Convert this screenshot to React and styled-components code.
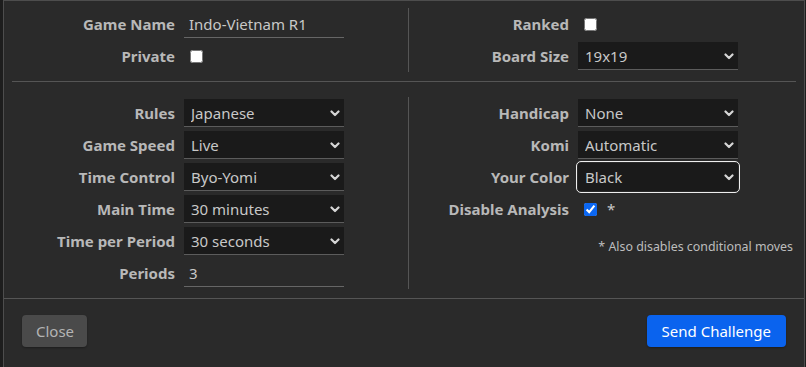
import React from 'react';
import styled, { createGlobalStyle } from 'styled-components';

const Global = createGlobalStyle`
  html, body { margin: 0; padding: 0; background: #1d1d1d; }
  body { font-family: "Noto Sans", "Open Sans", sans-serif; }
  * { box-sizing: border-box; }
`;

const Modal = styled.div`
  margin-left: 3px;
  width: 802px;
  min-height: 380px;
  background: #2a2a2a;
  border: 1px solid #4d4d4d;
  display: flex;
  flex-direction: column;
`;

const Section = styled.div`
  display: grid;
  grid-template-columns: 404px 1fr;
  padding-top: ${p => p.$pt || 0}px;
`;

const Column = styled.div`
  display: flex;
  flex-direction: column;
  border-left: ${p => (p.$divider ? '1px solid #555' : 'none')};
  padding-right: ${p => p.$pr}px;
`;

const Row = styled.div`
  display: grid;
  grid-template-columns: 1fr 160px;
  column-gap: 9px;
  align-items: center;
  height: 32px;
`;

const Label = styled.label`
  text-align: right;
  font-weight: 700;
  font-size: 15px;
  color: #b8b8b8;
  white-space: nowrap;
`;

const TextInput = styled.input`
  height: 28px;
  width: 160px;
  background: transparent;
  border: none;
  border-bottom: 1px solid #666;
  color: #c8c8c8;
  font: 15px "Noto Sans", "Open Sans", sans-serif;
  padding: 0 5px;
  outline: none;
`;

const SelectWrap = styled.div`
  position: relative;
  width: 160px;
  height: 28px;
  border-radius: ${p => (p.$focused ? '3px' : '0')};
  outline: ${p => (p.$focused ? '1.5px solid #eeeeee' : 'none')};
  outline-offset: 1px;
`;

const Select = styled.select`
  appearance: none;
  -webkit-appearance: none;
  width: 100%;
  height: 100%;
  background: #1a1a1a;
  border: none;
  border-bottom: 1px solid ${p => (p.$focused ? '#1a1a1a' : '#5c5c5c')};
  border-radius: ${p => (p.$focused ? '3px' : '0')};
  color: #c8c8c8;
  font: 15px "Noto Sans", "Open Sans", sans-serif;
  padding: 0 24px 0 7px;
  outline: none;
`;

const Chevron = styled.svg`
  position: absolute;
  right: 4px;
  top: 11px;
  width: 10px;
  height: 7px;
  pointer-events: none;
`;

const CheckCell = styled.div`
  display: flex;
  align-items: center;
  gap: 10px;
  color: #c8c8c8;
  font-size: 15px;
`;

const Check = styled.input`
  width: 13px;
  height: 13px;
  margin: 0 0 0 6px;
  accent-color: #0b67f2;
`;

const Divider = styled.hr`
  border: none;
  border-top: 1px solid #555;
  margin: 9px 8px 15px;
  height: 0;
`;

const Note = styled.div`
  align-self: flex-end;
  margin-top: 14px;
  margin-right: -55px;
  font-size: 12.4px;
  line-height: 16px;
  color: #bdbdbd;
`;

const Footer = styled.div`
  margin-top: 9px;
  border-top: 1px solid #555;
  padding: 16px 18px 16px 18px;
  display: flex;
  justify-content: space-between;
`;

const Button = styled.button`
  height: 32px;
  padding: 0 ${p => (p.$primary ? 15 : 13)}px 0 ${p => (p.$primary ? 15 : 14)}px;
  border: none;
  border-radius: 4px;
  font: 15px "Noto Sans", "Open Sans", sans-serif;
  background: ${p => (p.$primary ? '#0a63ee' : '#4a4a4a')};
  color: ${p => (p.$primary ? '#ffffff' : '#b4b4b4')};
  box-shadow: 0 1px 2px rgba(0,0,0,0.3);
`;

const DropSelect = ({ value, focused }) => (
  <SelectWrap $focused={focused}>
    <Select $focused={focused} defaultValue={value}>
      <option>{value}</option>
    </Select>
    <Chevron viewBox="0 0 10 7">
      <path d="M1.5 1.5 L5 5 L8.5 1.5" fill="none" stroke="#d6d6d6" strokeWidth="2.2" strokeLinecap="round" strokeLinejoin="round" />
    </Chevron>
  </SelectWrap>
);

export default function App() {
  return (
    <>
      <Global />
      <Modal>
        <Section $pt={7}>
          <Column $pr={64}>
            <Row>
              <Label>Game Name</Label>
              <TextInput defaultValue="Indo-Vietnam R1" />
            </Row>
            <Row>
              <Label>Private</Label>
              <CheckCell><Check type="checkbox" /></CheckCell>
            </Row>
          </Column>
          <Column $divider $pr={66}>
            <Row>
              <Label>Ranked</Label>
              <CheckCell><Check type="checkbox" /></CheckCell>
            </Row>
            <Row>
              <Label>Board Size</Label>
              <DropSelect value="19x19" />
            </Row>
          </Column>
        </Section>
        <Divider />
        <Section>
          <Column $pr={64}>
            <Row>
              <Label>Rules</Label>
              <DropSelect value="Japanese" />
            </Row>
            <Row>
              <Label>Game Speed</Label>
              <DropSelect value="Live" />
            </Row>
            <Row>
              <Label>Time Control</Label>
              <DropSelect value="Byo-Yomi" />
            </Row>
            <Row>
              <Label>Main Time</Label>
              <DropSelect value="30 minutes" />
            </Row>
            <Row>
              <Label>Time per Period</Label>
              <DropSelect value="30 seconds" />
            </Row>
            <Row>
              <Label>Periods</Label>
              <TextInput defaultValue="3" />
            </Row>
          </Column>
          <Column $divider $pr={66}>
            <Row>
              <Label>Handicap</Label>
              <DropSelect value="None" />
            </Row>
            <Row>
              <Label>Komi</Label>
              <DropSelect value="Automatic" />
            </Row>
            <Row>
              <Label>Your Color</Label>
              <DropSelect value="Black" focused />
            </Row>
            <Row>
              <Label>Disable Analysis</Label>
              <CheckCell><Check type="checkbox" defaultChecked />*</CheckCell>
            </Row>
            <Note>* Also disables conditional moves</Note>
          </Column>
        </Section>
        <Footer>
          <Button>Close</Button>
          <Button $primary>Send Challenge</Button>
        </Footer>
      </Modal>
    </>
  );
}
